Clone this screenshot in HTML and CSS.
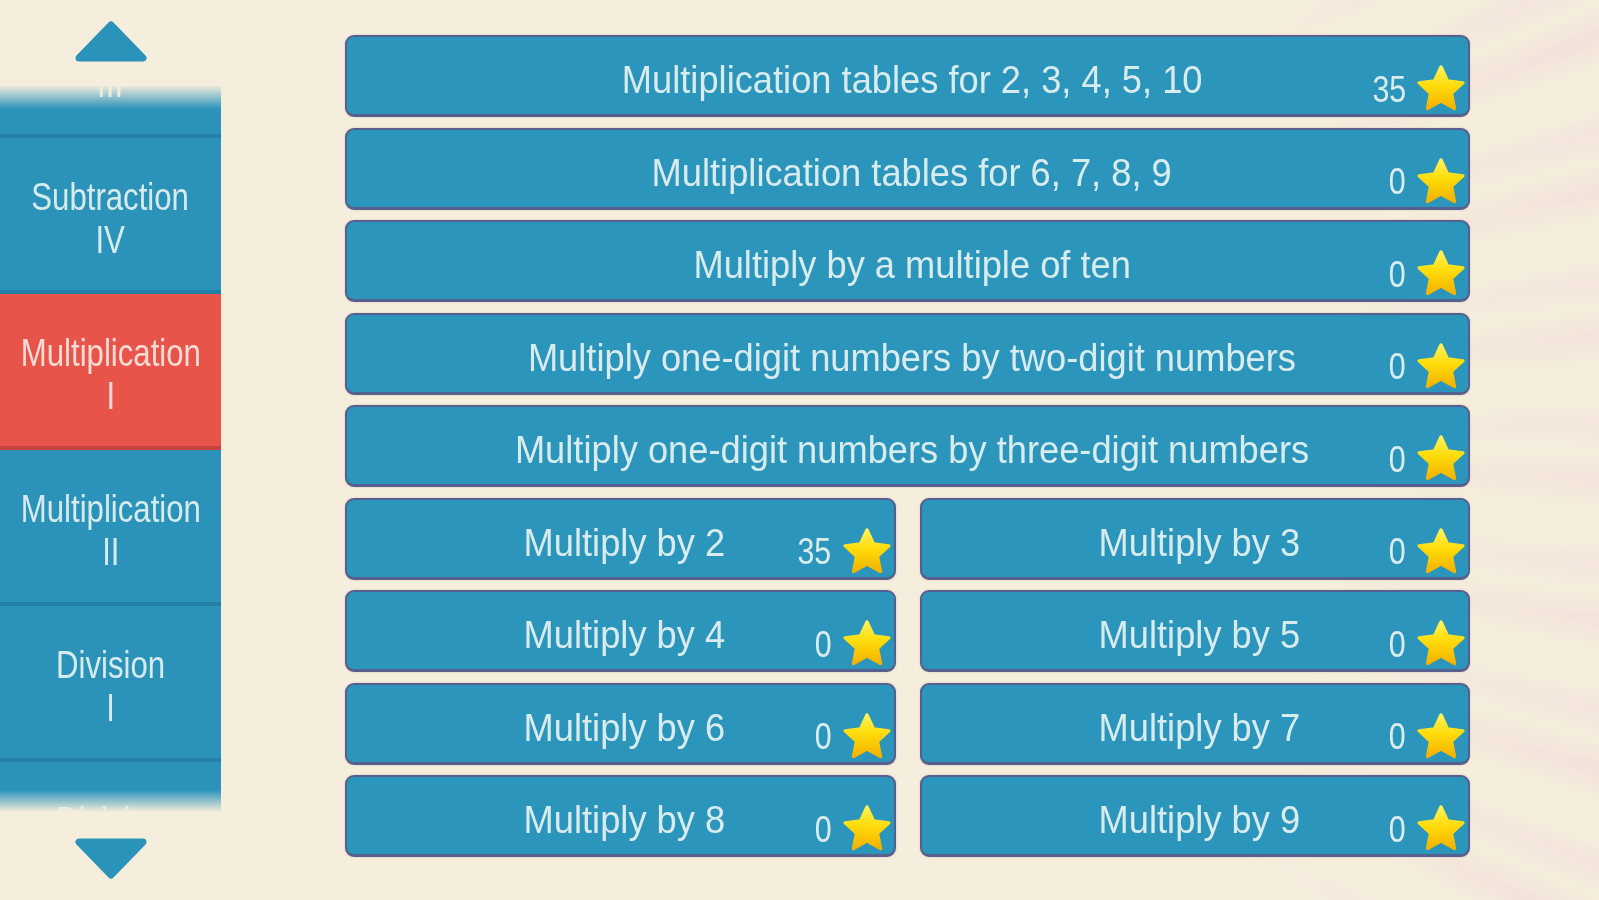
FILE: index.html
```html
<!DOCTYPE html>
<html>
<head>
<meta charset="utf-8">
<title>Multiplication I</title>
<link rel="stylesheet" href="styles.css">
</head>
<body>
<svg class="defs" width="0" height="0" aria-hidden="true">
  <defs>
    <linearGradient id="sg" x1="0" y1="0" x2="0" y2="1">
      <stop offset="0" stop-color="#fff25a"/>
      <stop offset="0.45" stop-color="#ffdc0a"/>
      <stop offset="1" stop-color="#f3b200"/>
    </linearGradient>
    <symbol id="star" viewBox="0 -1 50 48">
      <polygon points="25,1 31.76,15.7 47.83,17.58 35.94,28.55 39.11,44.42 25,36.5 10.89,44.42 14.06,28.55 2.17,17.58 18.24,15.7" fill="url(#sg)" stroke="url(#sg)" stroke-width="3.5" stroke-linejoin="round"/>
    </symbol>
  </defs>
</svg>
<div class="app">
  <aside class="sidebar">
    <div class="arrow-top">
      <svg class="arrow" viewBox="0 0 72 43"><polygon points="36,4 68,37 4,37" fill="#2b93ba" stroke="#2b93ba" stroke-width="7" stroke-linejoin="round"/></svg>
    </div>
    <div class="list">
      <div class="track">
        <div class="cat"><span class="label">Subtraction<br>III</span></div>
        <div class="cat"><span class="label">Subtraction<br>IV</span></div>
        <div class="cat active"><span class="label">Multiplication<br>I</span></div>
        <div class="cat"><span class="label">Multiplication<br>II</span></div>
        <div class="cat"><span class="label">Division<br>I</span></div>
        <div class="cat"><span class="label">Division<br>II</span></div>
      </div>
    </div>
    <div class="arrow-bottom">
      <svg class="arrow" viewBox="0 0 72 43"><polygon points="4,6 68,6 36,39" fill="#2b93ba" stroke="#2b93ba" stroke-width="7" stroke-linejoin="round"/></svg>
    </div>
  </aside>
  <main class="grid">
    <div class="btn wide"><span class="title">Multiplication tables for 2, 3, 4, 5, 10</span><span class="score"><span class="num">35</span><svg class="star"><use href="#star"/></svg></span></div>
    <div class="btn wide"><span class="title">Multiplication tables for 6, 7, 8, 9</span><span class="score"><span class="num">0</span><svg class="star"><use href="#star"/></svg></span></div>
    <div class="btn wide"><span class="title">Multiply by a multiple of ten</span><span class="score"><span class="num">0</span><svg class="star"><use href="#star"/></svg></span></div>
    <div class="btn wide"><span class="title">Multiply one-digit numbers by two-digit numbers</span><span class="score"><span class="num">0</span><svg class="star"><use href="#star"/></svg></span></div>
    <div class="btn wide"><span class="title">Multiply one-digit numbers by three-digit numbers</span><span class="score"><span class="num">0</span><svg class="star"><use href="#star"/></svg></span></div>
    <div class="btn"><span class="title">Multiply by 2</span><span class="score"><span class="num">35</span><svg class="star"><use href="#star"/></svg></span></div>
    <div class="btn"><span class="title">Multiply by 3</span><span class="score"><span class="num">0</span><svg class="star"><use href="#star"/></svg></span></div>
    <div class="btn"><span class="title">Multiply by 4</span><span class="score"><span class="num">0</span><svg class="star"><use href="#star"/></svg></span></div>
    <div class="btn"><span class="title">Multiply by 5</span><span class="score"><span class="num">0</span><svg class="star"><use href="#star"/></svg></span></div>
    <div class="btn"><span class="title">Multiply by 6</span><span class="score"><span class="num">0</span><svg class="star"><use href="#star"/></svg></span></div>
    <div class="btn"><span class="title">Multiply by 7</span><span class="score"><span class="num">0</span><svg class="star"><use href="#star"/></svg></span></div>
    <div class="btn"><span class="title">Multiply by 8</span><span class="score"><span class="num">0</span><svg class="star"><use href="#star"/></svg></span></div>
    <div class="btn"><span class="title">Multiply by 9</span><span class="score"><span class="num">0</span><svg class="star"><use href="#star"/></svg></span></div>
  </main>
</div>
</body>
</html>
```

FILE: styles.css
```css
* { box-sizing: border-box; }

html, body {
  margin: 0;
  width: 1599px;
  height: 900px;
  overflow: hidden;
}

body {
  font-family: "Liberation Sans", Arial, sans-serif;
  color: #d8eced;
  background:
    radial-gradient(circle at 520px 450px, #f5eedc 0, #f5eedc 820px, rgba(245, 238, 220, 0) 1120px),
    repeating-conic-gradient(from 0deg at 520px 450px, #f5eedc 0deg, #f2e1da 1.5deg, #f5eedc 3deg, #f5eedc 5deg, #f3e4dc 6deg, #f5eedc 7.5deg),
    #f5eedc;
}

.defs {
  display: block;
  width: 0;
  height: 0;
  overflow: hidden;
}

.app {
  display: flex;
  height: 900px;
}

/* ---------- sidebar ---------- */
.sidebar {
  width: 221px;
  flex: none;
  display: flex;
  flex-direction: column;
}

.arrow-top {
  height: 85px;
  display: flex;
  justify-content: center;
  padding-top: 21px;
}

.arrow-bottom {
  display: flex;
  justify-content: center;
  padding-top: 24px;
}

.arrow {
  width: 72px;
  height: 43px;
  display: block;
}

.list {
  height: 727px;
  overflow: hidden;
  -webkit-mask-image: linear-gradient(to bottom, transparent 0, #000 24px, #000 705px, transparent 727px);
  mask-image: linear-gradient(to bottom, transparent 0, #000 24px, #000 705px, transparent 727px);
}

.track {
  margin-top: -103px;
}

.cat {
  height: 156px;
  background: #2b93ba;
  border-bottom: 4px solid #2380a5;
  display: flex;
  align-items: center;
  justify-content: center;
  text-align: center;
  color: #d6ebeb;
  padding-top: 9px;
}

.label {
  display: inline-block;
  font-size: 38px;
  line-height: 43px;
  white-space: nowrap;
  transform: scaleX(0.82);
}

.cat.active {
  background: #e8534a;
  border-bottom-color: #c9443e;
  color: #f7dcd6;
}

/* ---------- main grid ---------- */
.grid {
  width: 1125px;
  margin-left: 124px;
  padding-top: 35px;
  display: grid;
  grid-template-columns: 1fr 1fr;
  grid-auto-rows: 82px;
  column-gap: 24px;
  row-gap: 10.5px;
  align-content: start;
}

.btn {
  display: grid;
  grid-template-columns: 1fr auto 1fr;
  background: #2c95bb;
  border: 2px solid #56608e;
  border-bottom-width: 3px;
  border-radius: 9px;
  box-shadow: 0 0 2px rgba(150, 90, 110, 0.35);
  padding: 11px 3px 3px 12px;
}

.btn.wide {
  grid-column: 1 / span 2;
}

.title {
  grid-column: 2;
  align-self: center;
  display: inline-block;
  font-size: 39px;
  line-height: 45px;
  white-space: nowrap;
  transform: scaleX(0.93);
}

.score {
  grid-column: 3;
  justify-self: end;
  align-self: end;
  display: flex;
  align-items: center;
  gap: 11px;
}

.num {
  display: inline-block;
  font-size: 37px;
  line-height: 1;
  padding-top: 2px;
  transform: scaleX(0.82);
  transform-origin: right center;
}

.star {
  width: 48px;
  height: 46px;
  display: block;
}
```
